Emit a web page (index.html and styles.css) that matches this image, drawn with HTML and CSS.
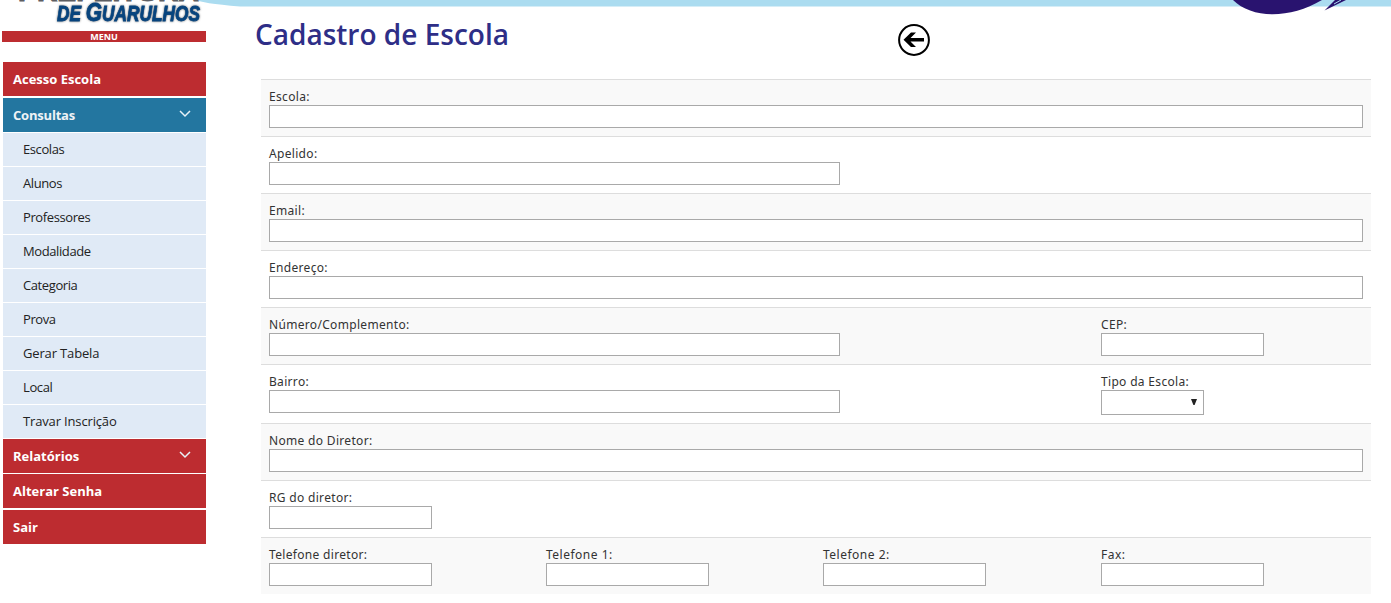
FILE: index.html
```html
<!DOCTYPE html>
<html lang="pt-BR">
<head>
<meta charset="utf-8">
<title>Cadastro de Escola</title>
<link rel="stylesheet" href="styles.css">
</head>
<body>
<svg class="banner" width="1391" height="20" viewBox="0 0 1391 20" aria-hidden="true">
  <path d="M197 0Q200 3 240 6.5H1391V0Z" fill="#abdcf0"/>
  <path d="M1233 0C1252 19 1290 19 1322 0Z" fill="#29136f"/>
  <path d="M1335 0L1324.5 10.5L1346 0Z" fill="#29136f"/>
  <path d="M1341 0l-7 4" stroke="#abdcf0"/>
</svg>
<div class="page">
  <aside class="sidebar">
    <svg class="logo" width="206" height="31" viewBox="0 0 206 31">
      <text class="logo-top" x="18" y="1.2" textLength="181" lengthAdjust="spacingAndGlyphs">PREFEITURA</text>
      <text class="logo-name" x="57" y="21" textLength="143" lengthAdjust="spacingAndGlyphs"><tspan class="caps">DE </tspan><tspan class="big">G</tspan><tspan class="caps">UARULHOS</tspan></text>
    </svg>
    <div class="menu-title">MENU</div>
    <nav class="menu">
      <a class="item gap"><span>Acesso Escola</span></a>
      <a class="item active"><span class="tight">Consultas</span><svg class="chev" width="12" height="8" viewBox="0 0 12 8"><path d="M1 1l5 5 5-5"/></svg></a>
      <a class="sub">Escolas</a>
      <a class="sub">Alunos</a>
      <a class="sub">Professores</a>
      <a class="sub">Modalidade</a>
      <a class="sub">Categoria</a>
      <a class="sub">Prova</a>
      <a class="sub wide">Gerar Tabela</a>
      <a class="sub">Local</a>
      <a class="sub wide">Travar Inscrição</a>
      <a class="item"><span>Relatórios</span><svg class="chev" width="12" height="8" viewBox="0 0 12 8"><path d="M1 1l5 5 5-5"/></svg></a>
      <a class="item gap"><span>Alterar Senha</span></a>
      <a class="item"><span>Sair</span></a>
    </nav>
  </aside>
  <main class="content">
    <header class="title-row">
      <h1>Cadastro de Escola</h1>
      <svg class="back" width="32" height="32" viewBox="0 0 32 32"><circle cx="16" cy="16" r="14.9" fill="#fff" stroke="#000" stroke-width="2"/><path d="M5.5 15.8L13 8.5h5L12.5 14H26v3.6H12.5l5.5 5.4h-5Z"/></svg>
    </header>
    <form class="form">
      <div class="row"><label class="c4">Escola:<input></label></div>
      <div class="row"><label class="c4">Apelido:<input class="half"></label></div>
      <div class="row"><label class="c4">Email:<input></label></div>
      <div class="row"><label class="c4">Endereço:<input></label></div>
      <div class="row"><label class="c3">Número/Complemento:<input class="half"></label><label>CEP:<input class="short"></label></div>
      <div class="row"><label class="c3">Bairro:<input class="half"></label><label>Tipo da Escola:<span class="select"><svg width="6" height="6" viewBox="0 0 6 6"><path d="M0 0h6L3.6 6H2.4Z" fill="#222"/></svg></span></label></div>
      <div class="row"><label class="c4">Nome do Diretor:<input></label></div>
      <div class="row"><label class="c4">RG do diretor:<input class="short"></label></div>
      <div class="row"><label>Telefone diretor:<input class="short"></label><label class="num">Telefone 1:<input class="short"></label><label class="num">Telefone 2:<input class="short"></label><label class="num">Fax:<input class="short"></label></div>
    </form>
  </main>
</div>
</body>
</html>
```
FILE: styles.css
```css
* { box-sizing: border-box; }
body { margin: 0; background: #fff; height: 603px; overflow: hidden; }
.banner { position: absolute; left: 0; top: 0; z-index: -1; }
.page { display: flex; height: 603px; }
.sidebar { width: 206px; }
.logo { display: block; }
.logo-top, .logo-name { font-family: "Liberation Sans", Arial, sans-serif; font-weight: bold; }
.logo-top { font-size: 22px; fill: #5d5e62; stroke: #5d5e62; stroke-width: .8px; }
.logo-name { font-style: italic; fill: #07447e; stroke: #07447e; stroke-width: .8px; filter: drop-shadow(.5px .8px .8px #777); }
.caps { font-size: 21.5px; }
.big { font-size: 26px; }
.menu-title { margin-left: 2px; height: 11px; background: #bd2c30; color: #fff; font: bold 9px/11px "Noto Sans", sans-serif; text-align: center; }
.menu { margin: 20px 0 0 3px; display: flex; flex-direction: column; }
.item { height: 34px; margin-bottom: 1px; padding: 0 15px 0 10px; display: flex; align-items: center; justify-content: space-between; background: #bd2c30; color: #fff; font: bold 13px/34px "Open Sans", sans-serif; }
.gap { margin-bottom: 2px; }
.active { background: #2376a0; color: #eef3f6; }
.tight { letter-spacing: -.2px; }
.chev { fill: none; stroke: #e8f2f8; stroke-width: 1.5; margin-top: -2px; }
.sub { height: 33px; margin-bottom: 1px; padding-left: 20px; background: #e0eaf6; color: #222; font: 13px/33px "Open Sans", sans-serif; letter-spacing: -.5px; }
.sub { letter-spacing: -.4px; }
.sub.wide { letter-spacing: -.15px; }
.content { margin-left: 40px; width: 1141px; padding: 19px 0 0 9px; }
.title-row { display: flex; height: 60px; }
h1 { margin: 0; width: 643px; color: #2e2e87; font: 600 28px/31px "Open Sans", sans-serif; }
.back { margin-top: 5px; }
.form { margin-left: 6px; width: 1110px; font: 12px/16px "Noto Sans", sans-serif; color: #333; }
.row { display: grid; grid-template-columns: 277px 277px 278px 270px; border-top: 1px solid #ddd; padding: 9px 0 8px 8px; }
.row:nth-child(odd) { background: #f9f9f9; }
label { display: block; letter-spacing: .32px; }
.num { letter-spacing: .5px; }
.c4 { grid-column: span 4; }
.c3 { grid-column: span 3; }
input { display: block; width: 1094px; height: 23px; border: 1px solid #a9a9a9; background: #fff; padding: 0; border-radius: 0; outline: 0; }
.half { width: 571px; }
.short { width: 163px; }
.select { display: flex; align-items: center; justify-content: flex-end; width: 103px; height: 25px; padding: 0 6px 2px 0; border: 1px solid #a9a9a9; background: #fff; }
```
